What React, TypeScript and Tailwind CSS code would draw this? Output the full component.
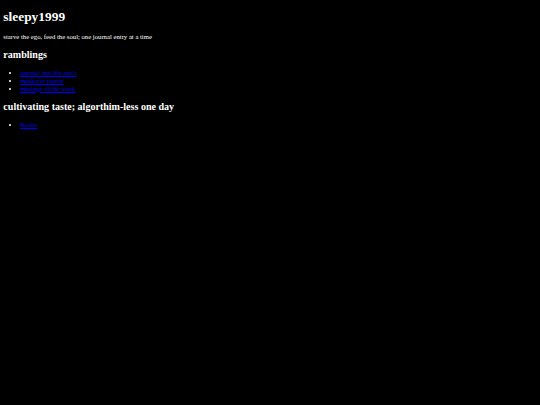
import React from 'react';

const ramblings = [
  { label: 'journal: my life and i', href: '#' },
  { label: 'mediocre poetry', href: '#' },
  { label: 'musings of the week', href: '#' },
];

const taste = [{ label: 'Books', href: '#' }];

const LinkList: React.FC<{ items: { label: string; href: string }[] }> = ({ items }) => (
  <ul className="list-disc pl-[16.8px] my-[6.7px] text-[6.7px] leading-[7.7px]">
    {items.map((item) => (
      <li key={item.label}>
        <a href={item.href} className="text-[#0000ee] underline">
          {item.label}
        </a>
      </li>
    ))}
  </ul>
);

export default function App() {
  return (
    <div
      className="min-h-screen bg-black text-white px-[3.35px] pb-[3.35px] flow-root"
      style={{ fontFamily: '"Liberation Serif", "Times New Roman", serif' }}
    >
      <h1 className="text-[13.4px] leading-[15.4px] font-bold mt-[9px] mb-[9px]">sleepy1999</h1>
      <p className="text-[6.7px] leading-[7.7px] my-[6.7px]">
        starve the ego, feed the soul; one journal entry at a time
      </p>

      <h2 className="text-[10.05px] leading-[11.6px] font-bold my-[8.3px]">ramblings</h2>
      <LinkList items={ramblings} />

      <h2 className="text-[10.05px] leading-[11.6px] font-bold my-[8.3px]">
        cultivating taste; algorthim-less one day
      </h2>
      <LinkList items={taste} />
    </div>
  );
}
